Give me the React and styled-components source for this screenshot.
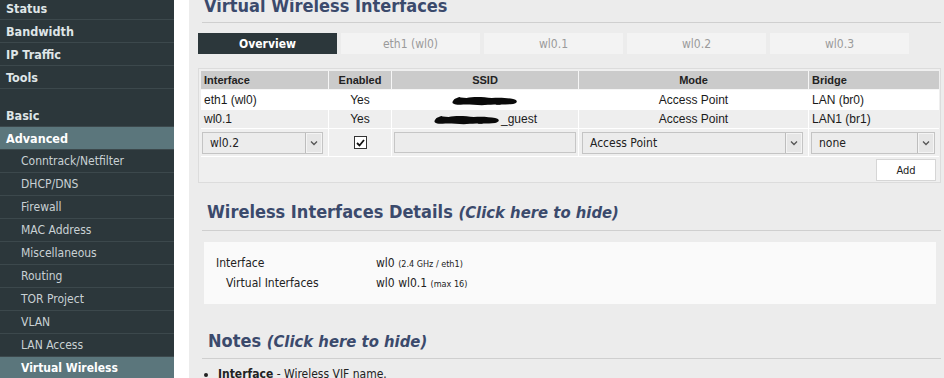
import React from "react";
import styled, { createGlobalStyle } from "styled-components";

const GlobalStyle = createGlobalStyle`
  html, body { margin: 0; padding: 0; background: #ffffff; overflow: hidden; }
  body { font-family: "DejaVu Sans Condensed", "DejaVu Sans", sans-serif; }
`;

const TAHOMA = `"DejaVu Sans Condensed", "DejaVu Sans", sans-serif`;
const ARIAL = `"Liberation Sans", Arial, sans-serif`;

const Layout = styled.div`
  display: flex;
  width: 944px;
  height: 378px;
  overflow: hidden;
`;

const Sidebar = styled.nav`
  width: 174px;
  flex: none;
  background: #2c373b;
  display: flex;
  flex-direction: column;
  margin-top: -3px;
`;

const NavItem = styled.div`
  height: 22px;
  flex: none;
  border-bottom: 1px solid #3c484c;
  display: flex;
  align-items: center;
  padding-left: ${(p) => (p.$sub ? "21px" : "6px")};
  font-family: ${TAHOMA};
  font-size: ${(p) => (p.$sub ? "12px" : "12.5px")};
  font-weight: ${(p) => (p.$sub && !p.$active ? 400 : 700)};
  color: ${(p) => (p.$active ? "#ffffff" : p.$sub ? "#c9d1d4" : "#dfe5e7")};
  background: ${(p) => (p.$active ? "#5b767c" : "transparent")};
`;

const NavGap = styled.div`
  height: 15px;
  flex: none;
`;

const Main = styled.main`
  flex: 1;
  margin-left: 15px;
  background: #ececec;
  padding: 0 3px 0 9px;
  display: flex;
  flex-direction: column;
`;

const Heading = styled.h2`
  margin: ${(p) => p.$mt || "0"} 0 0 4px;
  padding: 0 0 ${(p) => p.$pb || "4px"} ${(p) => p.$pl || "2px"};
  border-bottom: 1px solid #cfcfcf;
  font-family: ${TAHOMA};
  font-size: 18px;
  font-weight: 700;
  line-height: 20px;
  color: #3b4a6c;
  white-space: nowrap;
`;

const HideLink = styled.span`
  font-style: italic;
  font-size: 16.5px;
`;

const Tabs = styled.div`
  display: flex;
  gap: 4px;
  margin-top: 10px;
`;

const Tab = styled.div`
  width: 139px;
  height: 21px;
  display: flex;
  align-items: center;
  justify-content: center;
  font-family: ${TAHOMA};
  font-size: 12px;
  font-weight: ${(p) => (p.$active ? 700 : 400)};
  color: ${(p) => (p.$active ? "#ffffff" : "#9a9a9a")};
  background: ${(p) => (p.$active ? "#2c373b" : "#f3f3f3")};
`;

const GridBox = styled.div`
  margin-top: 14px;
  border: 1px solid #dcdcdc;
  background: #efefef;
  padding: 2px 1px 0 2px;
`;

const Table = styled.table`
  width: 100%;
  table-layout: fixed;
  border-collapse: separate;
  border-spacing: 0;
  font-family: ${ARIAL};
  font-size: 12px;
  color: #1a1a1a;
`;

const HeadCell = styled.th`
  box-sizing: border-box;
  height: 19px;
  padding: 0 3px;
  background: #cbcbcb;
  border-right: 1px solid #f6f6f6;
  border-bottom: 1px solid #f6f6f6;
  font-size: 11px;
  font-weight: 700;
  text-align: ${(p) => p.$align || "center"};
  color: #222;
  &:last-child { border-right: none; }
`;

const Row = styled.tr`
  background: ${(p) => p.$bg || "transparent"};
`;

const Cell = styled.td`
  box-sizing: border-box;
  height: ${(p) => p.$h || "19px"};
  padding: 0 ${(p) => p.$px || "3px"};
  border-right: 1px solid #ffffff;
  border-bottom: 1px solid #ffffff;
  text-align: ${(p) => p.$align || "left"};
  vertical-align: middle;
  white-space: nowrap;
  &:last-child { border-right: none; }
`;

const SelectBox = styled.div`
  box-sizing: border-box;
  height: 22px;
  display: flex;
  align-items: stretch;
  border: 1px solid #c4c4c4;
  background: #ececec;
  font-family: ${TAHOMA};
  font-size: 12px;
  color: #222;
  width: ${(p) => p.$w || "auto"};
  margin-left: ${(p) => p.$ml || "0"};
`;

const SelectValue = styled.div`
  flex: 1;
  display: flex;
  align-items: center;
  padding-left: 7px;
`;

const SelectArrow = styled.div`
  width: 16px;
  display: flex;
  align-items: center;
  justify-content: center;
  border-left: 1px solid #bdbdbd;
  background: #e6e6e6;
  box-shadow: inset 0 0 0 1px #f4f4f4;
`;

const TextInput = styled.div`
  box-sizing: border-box;
  height: 21px;
  border: 1px solid #c6c6c6;
  background: #ececec;
`;

const Check = styled.div`
  width: 11px;
  height: 11px;
  margin: 0 auto;
  border: 1px solid #333;
  background: #fff;
  display: flex;
  align-items: center;
  justify-content: center;
`;

const AddRow = styled.div`
  display: flex;
  justify-content: flex-end;
  padding: 2px 3px 1px 0;
`;

const AddButton = styled.button`
  width: 60px;
  height: 22px;
  border: 1px solid #d6d6d6;
  background: #ffffff;
  font-family: ${TAHOMA};
  font-size: 11px;
  color: #222;
  padding: 0;
`;

const DetailsBox = styled.div`
  margin: 11px 5px 0 6px;
  background: #fafafa;
  padding: 11px 0;
  font-family: ${TAHOMA};
  font-size: 12px;
  color: #222;
`;

const DetailRow = styled.div`
  display: flex;
  height: 20px;
  align-items: center;
`;

const DetailLabel = styled.div`
  width: ${(p) => (p.$indent ? "150px" : "160px")};
  padding-left: ${(p) => (p.$indent ? "22px" : "12px")};
`;

const Small = styled.span`
  font-size: 9px;
`;

const NotesList = styled.ul`
  margin: 7px 0 0 6px;
  padding: 0 0 0 14px;
  font-family: ${TAHOMA};
  font-size: 12px;
  color: #222;
  li { line-height: 16px; }
`;

const Redacted = ({ w }) => (
  <svg width={w} height="11" viewBox="0 0 70 11" style={{ verticalAlign: "middle" }}>
    <path
      d="M2 6 C4 2, 10 2, 16 3 C24 1, 34 2, 42 3 C50 2, 58 3, 64 4 C69 5, 69 8, 64 9 C56 10, 46 9, 38 10 C28 11, 18 9, 10 10 C4 10, 0 9, 2 6 Z"
      fill="#0a0a0a"
    />
    <path d="M6 3 L9 2 L11 4 Z M48 8 L52 10 L46 10 Z" fill="#0a0a0a" />
  </svg>
);

const Chevron = () => (
  <svg width="8" height="6" viewBox="0 0 8 6">
    <path d="M1 1.5 L4 4.5 L7 1.5" fill="none" stroke="#555" strokeWidth="1.3" />
  </svg>
);

const Select = ({ value, w, ml }) => (
  <SelectBox $w={w} $ml={ml}>
    <SelectValue>{value}</SelectValue>
    <SelectArrow>
      <Chevron />
    </SelectArrow>
  </SelectBox>
);

const navTop = ["Status", "Bandwidth", "IP Traffic", "Tools"];
const navSub = [
  "Conntrack/Netfilter",
  "DHCP/DNS",
  "Firewall",
  "MAC Address",
  "Miscellaneous",
  "Routing",
  "TOR Project",
  "VLAN",
  "LAN Access",
];

export default function App() {
  return (
    <>
      <GlobalStyle />
      <Layout>
        <Sidebar>
          {navTop.map((n) => (
            <NavItem key={n}>{n}</NavItem>
          ))}
          <NavGap />
          <NavItem>Basic</NavItem>
          <NavItem $active>Advanced</NavItem>
          {navSub.map((n) => (
            <NavItem key={n} $sub>
              {n}
            </NavItem>
          ))}
          <NavItem $sub $active>
            Virtual Wireless
          </NavItem>
        </Sidebar>
        <Main>
          <Heading $mt="-4px" $pb="6px">Virtual Wireless Interfaces</Heading>
          <Tabs>
            <Tab $active>Overview</Tab>
            <Tab>eth1 (wl0)</Tab>
            <Tab>wl0.1</Tab>
            <Tab>wl0.2</Tab>
            <Tab>wl0.3</Tab>
          </Tabs>
          <GridBox>
            <Table>
              <colgroup>
                <col style={{ width: "128px" }} />
                <col style={{ width: "63px" }} />
                <col style={{ width: "187px" }} />
                <col style={{ width: "230px" }} />
                <col />
              </colgroup>
              <thead>
                <tr>
                  <HeadCell $align="left">Interface</HeadCell>
                  <HeadCell>Enabled</HeadCell>
                  <HeadCell>SSID</HeadCell>
                  <HeadCell>Mode</HeadCell>
                  <HeadCell $align="left">Bridge</HeadCell>
                </tr>
              </thead>
              <tbody>
                <Row $bg="#ffffff">
                  <Cell $h="20px">eth1 (wl0)</Cell>
                  <Cell $h="20px" $align="center">Yes</Cell>
                  <Cell $h="20px" $align="center">
                    <Redacted w={68} />
                  </Cell>
                  <Cell $h="20px" $align="center">Access Point</Cell>
                  <Cell $h="20px">LAN (br0)</Cell>
                </Row>
                <Row $bg="#eeeeee">
                  <Cell>wl0.1</Cell>
                  <Cell $align="center">Yes</Cell>
                  <Cell $align="center">
                    <Redacted w={68} />
                    _guest
                  </Cell>
                  <Cell $align="center">Access Point</Cell>
                  <Cell>LAN1 (br1)</Cell>
                </Row>
                <Row>
                  <Cell $h="28px" $px="1px">
                    <Select value="wl0.2" w="121px" />
                  </Cell>
                  <Cell $h="28px">
                    <Check>
                      <svg width="9" height="8" viewBox="0 0 9 8">
                        <path d="M1 4 L3.5 6.5 L8 1" fill="none" stroke="#111" strokeWidth="1.8" />
                      </svg>
                    </Check>
                  </Cell>
                  <Cell $h="28px" $px="2px">
                    <TextInput />
                  </Cell>
                  <Cell $h="28px" $px="2px">
                    <Select value="Access Point" w="221px" ml="1px" />
                  </Cell>
                  <Cell $h="28px" $px="2px">
                    <Select value="none" w="124px" />
                  </Cell>
                </Row>
              </tbody>
            </Table>
            <AddRow>
              <AddButton>Add</AddButton>
            </AddRow>
          </GridBox>
          <Heading $mt="19px" $pl="5px" $pb="7px">
            Wireless Interfaces Details <HideLink>(Click here to hide)</HideLink>
          </Heading>
          <DetailsBox>
            <DetailRow>
              <DetailLabel>Interface</DetailLabel>
              <div>
                wl0 <Small>(2.4 GHz / eth1)</Small>
              </div>
            </DetailRow>
            <DetailRow>
              <DetailLabel $indent>Virtual Interfaces</DetailLabel>
              <div>
                wl0 wl0.1 <Small>(max 16)</Small>
              </div>
            </DetailRow>
          </DetailsBox>
          <Heading $mt="27px" $pl="6px" $pb="6px">
            Notes <HideLink>(Click here to hide)</HideLink>
          </Heading>
          <NotesList>
            <li>
              <b>Interface</b> - Wireless VIF name.
            </li>
          </NotesList>
        </Main>
      </Layout>
    </>
  );
}
